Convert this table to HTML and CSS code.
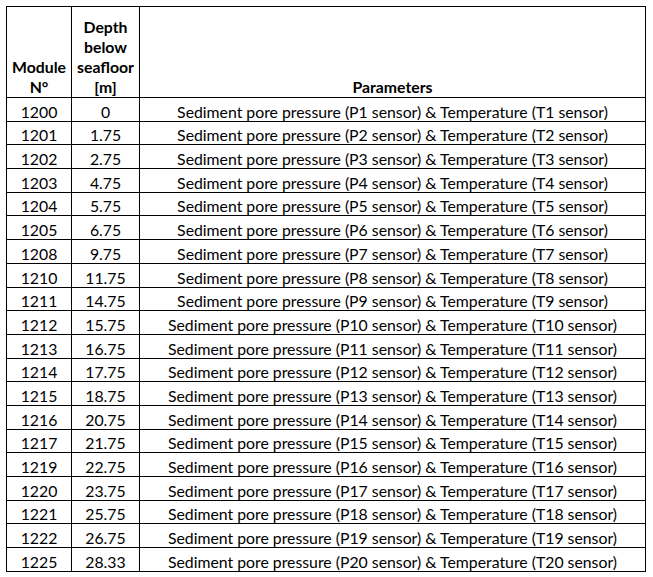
FILE: index.html
```html
<!DOCTYPE html>
<html>
<head>
<meta charset="utf-8">
<link rel="stylesheet" href="styles.css">
</head>
<body>
<table class="grid">
  <colgroup>
    <col class="c1"><col class="c2"><col class="c3">
  </colgroup>
  <thead>
    <tr class="head">
      <th>Module<br>N°</th>
      <th>Depth<br>below<br>seafloor<br>[m]</th>
      <th>Parameters</th>
    </tr>
  </thead>
  <tbody>
    <tr><td>1200</td><td>0</td><td>Sediment pore pressure (P1 sensor) &amp; Temperature (T1 sensor)</td></tr>
    <tr><td>1201</td><td>1.75</td><td>Sediment pore pressure (P2 sensor) &amp; Temperature (T2 sensor)</td></tr>
    <tr><td>1202</td><td>2.75</td><td>Sediment pore pressure (P3 sensor) &amp; Temperature (T3 sensor)</td></tr>
    <tr><td>1203</td><td>4.75</td><td>Sediment pore pressure (P4 sensor) &amp; Temperature (T4 sensor)</td></tr>
    <tr><td>1204</td><td>5.75</td><td>Sediment pore pressure (P5 sensor) &amp; Temperature (T5 sensor)</td></tr>
    <tr><td>1205</td><td>6.75</td><td>Sediment pore pressure (P6 sensor) &amp; Temperature (T6 sensor)</td></tr>
    <tr><td>1208</td><td>9.75</td><td>Sediment pore pressure (P7 sensor) &amp; Temperature (T7 sensor)</td></tr>
    <tr><td>1210</td><td>11.75</td><td>Sediment pore pressure (P8 sensor) &amp; Temperature (T8 sensor)</td></tr>
    <tr><td>1211</td><td>14.75</td><td>Sediment pore pressure (P9 sensor) &amp; Temperature (T9 sensor)</td></tr>
    <tr><td>1212</td><td>15.75</td><td>Sediment pore pressure (P10 sensor) &amp; Temperature (T10 sensor)</td></tr>
    <tr><td>1213</td><td>16.75</td><td>Sediment pore pressure (P11 sensor) &amp; Temperature (T11 sensor)</td></tr>
    <tr><td>1214</td><td>17.75</td><td>Sediment pore pressure (P12 sensor) &amp; Temperature (T12 sensor)</td></tr>
    <tr><td>1215</td><td>18.75</td><td>Sediment pore pressure (P13 sensor) &amp; Temperature (T13 sensor)</td></tr>
    <tr><td>1216</td><td>20.75</td><td>Sediment pore pressure (P14 sensor) &amp; Temperature (T14 sensor)</td></tr>
    <tr><td>1217</td><td>21.75</td><td>Sediment pore pressure (P15 sensor) &amp; Temperature (T15 sensor)</td></tr>
    <tr><td>1219</td><td>22.75</td><td>Sediment pore pressure (P16 sensor) &amp; Temperature (T16 sensor)</td></tr>
    <tr><td>1220</td><td>23.75</td><td>Sediment pore pressure (P17 sensor) &amp; Temperature (T17 sensor)</td></tr>
    <tr><td>1221</td><td>25.75</td><td>Sediment pore pressure (P18 sensor) &amp; Temperature (T18 sensor)</td></tr>
    <tr><td>1222</td><td>26.75</td><td>Sediment pore pressure (P19 sensor) &amp; Temperature (T19 sensor)</td></tr>
    <tr><td>1225</td><td>28.33</td><td>Sediment pore pressure (P20 sensor) &amp; Temperature (T20 sensor)</td></tr>
  </tbody>
</table>
</body>
</html>
```

FILE: styles.css
```css
html, body {
  margin: 0;
  padding: 0;
  background: #ffffff;
}
body {
  padding: 6px 0 0 6px;
  font-family: Lato, "Liberation Sans", sans-serif;
  font-size: 15.8px;
  color: #000000;
}
.grid {
  border-collapse: separate;
  border-spacing: 0;
  table-layout: fixed;
  width: 640px;
  border-top: 1px solid #000;
  border-left: 1px solid #000;
}
.c1 { width: 65px; }
.c2 { width: 68px; }
.c3 { width: 506px; }
.grid th,
.grid td {
  box-sizing: border-box;
  padding: 0;
  border-right: 1px solid #000;
  border-bottom: 1px solid #000;
  text-align: center;
  white-space: nowrap;
  line-height: 19px;
  vertical-align: bottom;
}
.grid th {
  height: 91px;
  font-weight: bold;
  line-height: 20px;
}
.grid td {
  height: 23.7px;
}
```
